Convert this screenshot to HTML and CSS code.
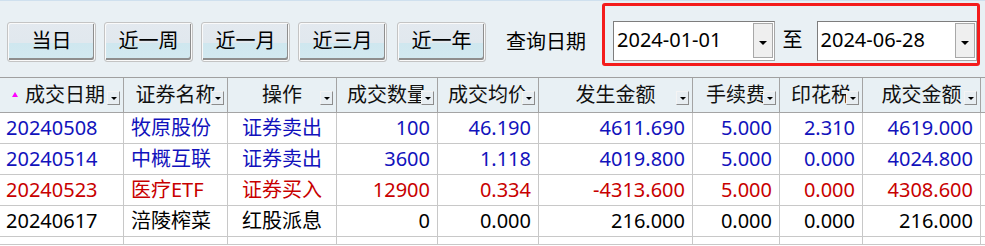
FILE: index.html
```html
<!DOCTYPE html>
<html lang="zh-CN">
<head>
<meta charset="utf-8">
<link rel="stylesheet" href="styles.css">
</head>
<body>
<div class="toolbar">
  <button class="btn">当日</button>
  <button class="btn">近一周</button>
  <button class="btn">近一月</button>
  <button class="btn">近三月</button>
  <button class="btn">近一年</button>
  <span class="label">查询日期</span>
  <div class="range">
    <div class="date"><span class="date-text">2024-01-01</span><span class="drop"><i class="tri"></i></span></div>
    <span class="to">至</span>
    <div class="date"><span class="date-text">2024-06-28</span><span class="drop"><i class="tri"></i></span></div>
  </div>
</div>
<div class="grid">
  <div class="hd first"><i class="sort"></i>成交日期<span class="hdrop"><i class="tri"></i></span></div>
  <div class="hd">证券名称<span class="hdrop"><i class="tri"></i></span></div>
  <div class="hd">操作<span class="hdrop"><i class="tri"></i></span></div>
  <div class="hd">成交数量<span class="hdrop"><i class="tri"></i></span></div>
  <div class="hd">成交均价<span class="hdrop"><i class="tri"></i></span></div>
  <div class="hd">发生金额<span class="hdrop"><i class="tri"></i></span></div>
  <div class="hd">手续费<span class="hdrop"><i class="tri"></i></span></div>
  <div class="hd">印花税<span class="hdrop"><i class="tri"></i></span></div>
  <div class="hd">成交金额<span class="hdrop"><i class="tri"></i></span></div>
  <div class="hd last"></div>

  <div class="c l blue">20240508</div><div class="c n blue">牧原股份</div><div class="c m blue">证券卖出</div><div class="c r blue">100</div><div class="c r blue">46.190</div><div class="c r blue">4611.690</div><div class="c r blue">5.000</div><div class="c r blue">2.310</div><div class="c r blue">4619.000</div><div class="c last"></div>

  <div class="c l blue">20240514</div><div class="c n blue">中概互联</div><div class="c m blue">证券卖出</div><div class="c r blue">3600</div><div class="c r blue">1.118</div><div class="c r blue">4019.800</div><div class="c r blue">5.000</div><div class="c r blue">0.000</div><div class="c r blue">4024.800</div><div class="c last"></div>

  <div class="c l red">20240523</div><div class="c n red">医疗ETF</div><div class="c m red">证券买入</div><div class="c r red">12900</div><div class="c r red">0.334</div><div class="c r red">-4313.600</div><div class="c r red">5.000</div><div class="c r red">0.000</div><div class="c r red">4308.600</div><div class="c last"></div>

  <div class="c l">20240617</div><div class="c n">涪陵榨菜</div><div class="c m">红股派息</div><div class="c r">0</div><div class="c r">0.000</div><div class="c r">216.000</div><div class="c r">0.000</div><div class="c r">0.000</div><div class="c r">216.000</div><div class="c last"></div>

  <div class="c"></div><div class="c"></div><div class="c"></div><div class="c"></div><div class="c"></div><div class="c"></div><div class="c"></div><div class="c"></div><div class="c"></div><div class="c last"></div>
</div>
</body>
</html>
```

FILE: styles.css
```css
html, body {
  margin: 0;
  padding: 0;
  background: #ffffff;
  overflow: hidden;
}
body {
  width: 985px;
  height: 246px;
  font-family: "Noto Sans", "Noto Sans CJK SC", sans-serif;
  font-size: 20px;
  color: #000;
}
.toolbar {
  height: 77px;
  box-sizing: border-box;
  border-top: 1px solid #cfe0ee;
  background: #e9f0f4;
  display: flex;
  align-items: flex-start;
  padding-left: 7px;
}
.btn {
  margin-top: 21px;
  margin-right: 8px;
  width: 89px;
  height: 40px;
  box-sizing: border-box;
  border: 1px solid #c4c4c4;
  border-radius: 3px;
  padding: 0 0 3px 0;
  font-family: inherit;
  font-size: 20px;
  line-height: 1;
  color: #000;
  background: linear-gradient(#e3e9ef 0, #e1e8ee 52%, #cfe7ef 52%, #d3e9f0 100%);
  box-shadow: inset 1px 1px 0 #fafafa, inset -1px -1px 0 #fafafa, inset -2px -3px 0 #8e8e8e;
}
.btn:nth-child(4) { margin-right: 10px; }
.label {
  margin-left: 12px;
  margin-top: 27px;
  line-height: 28px;
}
.range {
  margin-left: 16px;
  margin-top: 2px;
  width: 378px;
  height: 63px;
  box-sizing: border-box;
  border: 3px solid #f41c1c;
  border-radius: 3px;
  padding: 15px 0 0 8px;
  display: flex;
  align-items: flex-start;
}
.date {
  width: 164px;
  height: 40px;
  box-sizing: border-box;
  border: 1px solid #7d7d7d;
  border-right-color: #a6a6a6;
  border-bottom-color: #a6a6a6;
  background: #fff;
  display: flex;
  align-items: stretch;
}
.date + .to + .date { width: 163px; }
.date-text {
  flex: 1;
  padding-left: 3px;
  line-height: 36px;
}
.drop {
  width: 20px;
  margin: 1px 1px 2px 0;
  box-sizing: border-box;
  border: 1px solid #a8a8a8;
  background: #efefef;
  display: flex;
  align-items: center;
  justify-content: center;
  padding-top: 4px;
}
.tri {
  display: block;
  width: 0;
  height: 0;
  border-left: 4px solid transparent;
  border-right: 4px solid transparent;
  border-top: 4px solid #000;
}
.to {
  margin: 0 14px 0 8px;
  line-height: 38px;
}
.grid {
  display: grid;
  grid-template-columns: 124px 104px 109px 101px 101px 154px 87px 83px 118px 1fr;
  grid-template-rows: 35px repeat(4, 31px) 8px;
  border-top: 1px solid #a0a0a0;
}
.hd {
  position: relative;
  box-sizing: border-box;
  background: #e8f0f4;
  border-right: 1px solid #a4a4a4;
  border-bottom: 1px solid #a4a4a4;
  text-align: center;
  line-height: 33px;
  white-space: nowrap;
  overflow: hidden;
  color: #111;
}
.hd.first { text-align: left; padding-left: 12px; }
.hd.last { border-right: none; }
.sort {
  display: inline-block;
  width: 0;
  height: 0;
  border-left: 3px solid transparent;
  border-right: 3px solid transparent;
  border-bottom: 5px solid #ff00ff;
  margin-right: 7px;
  vertical-align: 5px;
}
.hdrop {
  position: absolute;
  right: 3px;
  top: 13px;
  width: 13px;
  height: 14px;
  box-sizing: border-box;
  border: 1px solid #8c8c8c;
  border-top-color: #f4f4f4;
  border-left-color: #f4f4f4;
  background: #e8eef2;
  display: flex;
  align-items: center;
  justify-content: center;
  padding-top: 1px;
}
.hdrop .tri {
  border-left-width: 3px;
  border-right-width: 3px;
  border-top-width: 3px;
}
.c {
  box-sizing: border-box;
  border-right: 1px solid #c8c8c8;
  border-bottom: 1px solid #c8c8c8;
  line-height: 30px;
  white-space: nowrap;
  overflow: hidden;
  color: #000;
}
.c.last { border-right: none; }
.c.l { padding-left: 6px; }
.c.n { padding-left: 7px; }
.c.m { text-align: center; }
.c.r { text-align: right; padding-right: 7px; }
.blue { color: #1212bc; }
.red { color: #c80000; }
```
